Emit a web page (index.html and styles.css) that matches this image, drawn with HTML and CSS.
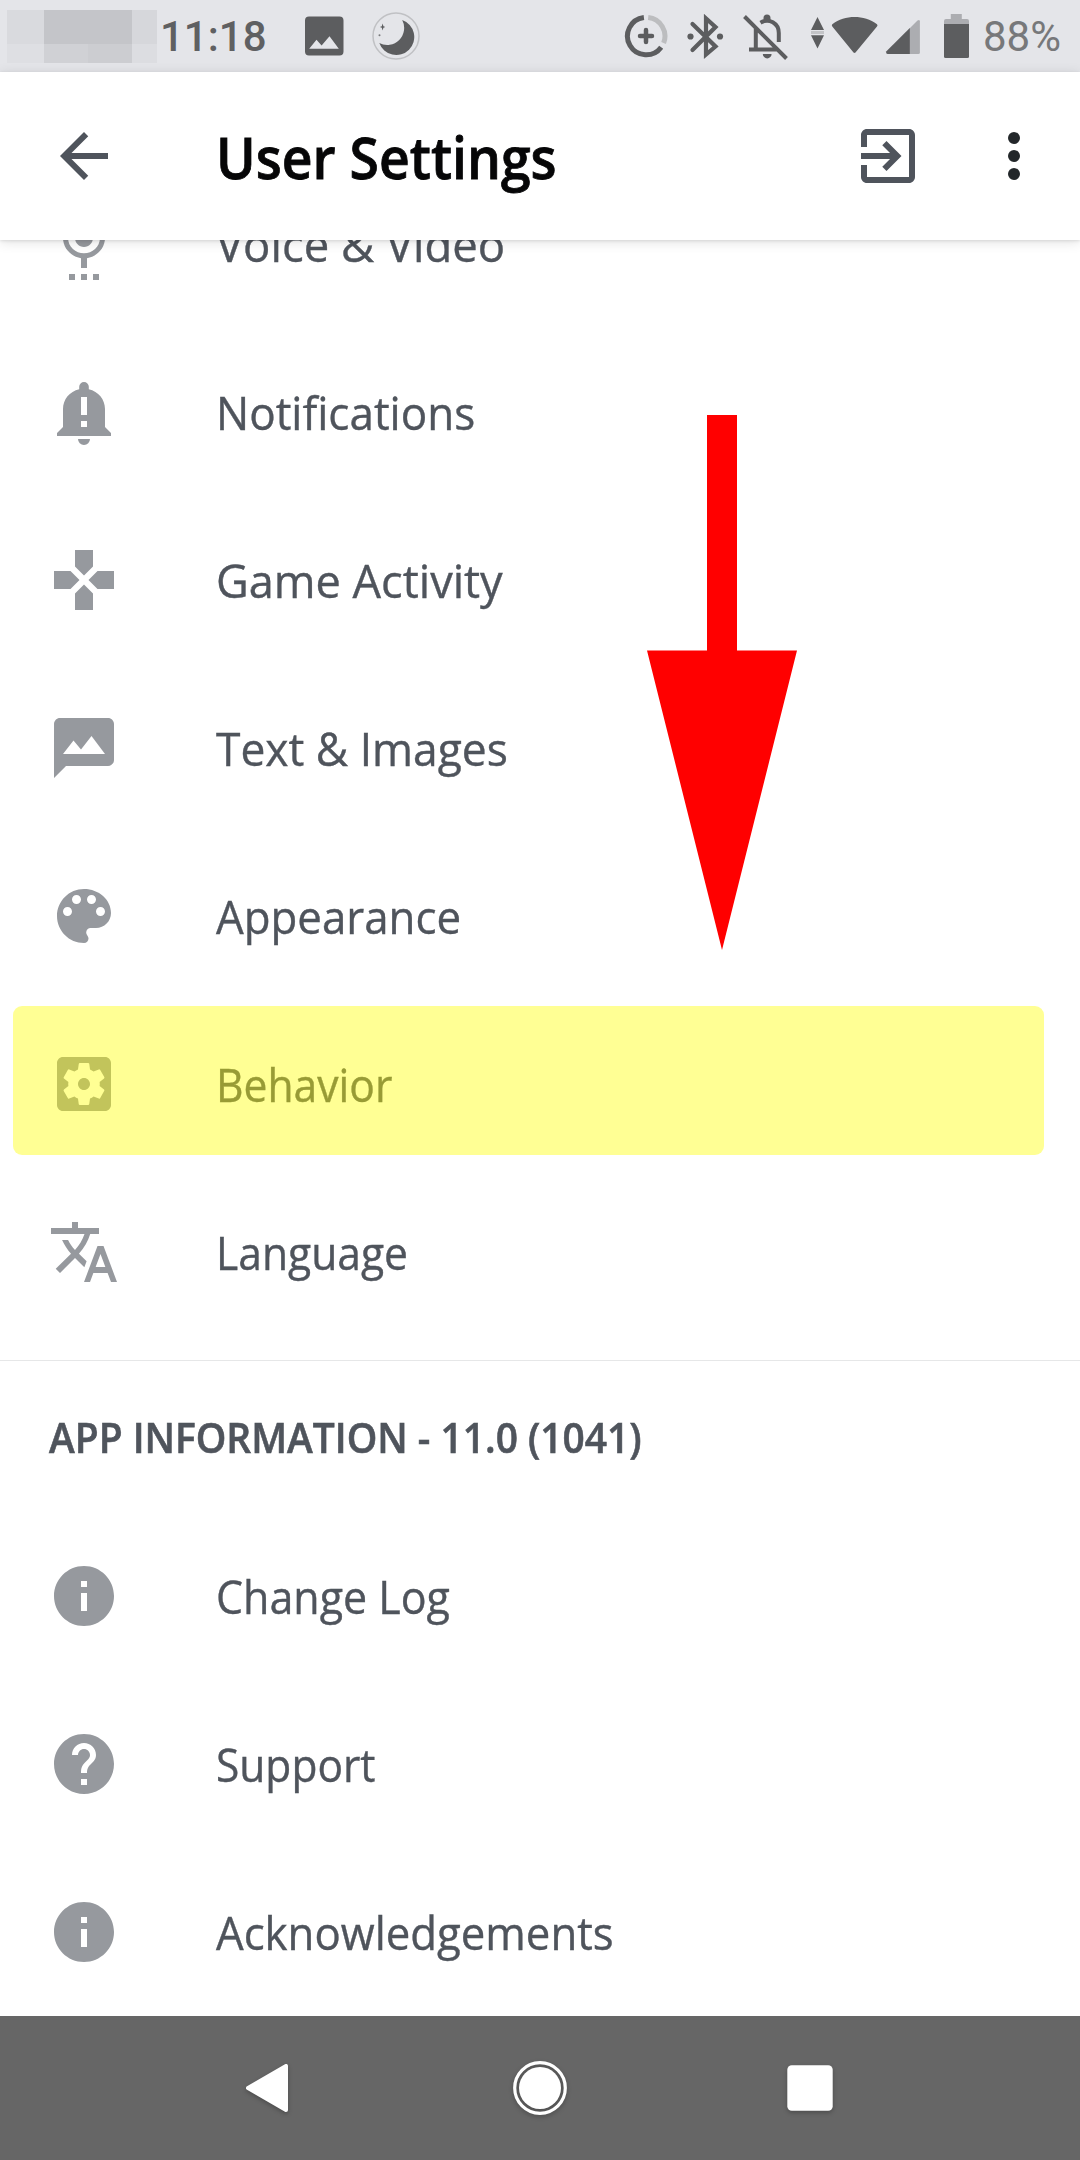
FILE: index.html
```html
<!DOCTYPE html>
<html lang="en">
<head>
<meta charset="utf-8">
<title>User Settings</title>
<link rel="stylesheet" href="styles.css">
</head>
<body>
<div class="screen">
  <div class="status-bar">
    <div class="mosaic"><i class="m1"></i><i class="m2"></i><i class="m3"></i><i class="m4"></i><i class="m5"></i><i class="m6"></i><i class="m7"></i></div>
    <span class="clock">11:18</span>
    <svg class="st-photo" width="40" height="72" viewBox="304 0 40 72"><path fill="#5c5d5f" fill-rule="evenodd" d="M309 16.5h30.500a4 4 0 0 1 4 4v31a4 4 0 0 1-4 4h-30.500a4 4 0 0 1-4-4v-31a4 4 0 0 1 4-4zM309.200 48.700h29.600l-9.300-12.400-7.900 9.200-5.100-5.800z"/></svg>
    <svg class="st-moon" width="50" height="72" viewBox="371 0 50 72"><circle cx="396" cy="36" r="23" fill="none" stroke="#c0c1c4" stroke-width="1.500"/><path fill="#5c5d5f" d="M402.200 20A18 18 0 1 1 379.300 43A17 17 0 0 0 402.200 20zM382.600 23.500l.8 2.700 1.900.8-1.900.8-.8 2.700-.8-2.700-1.900-.8 1.900-.8z"/><circle cx="379.500" cy="35.300" r="1" fill="#77787a"/></svg>
    <div class="status-right">
      <svg class="st-saver" width="44" height="72" viewBox="624 0 44 72" fill="none" stroke="#5c5d5f" stroke-width="5"><path d="M643.900 17.500A18.700 18.700 0 1 0 661.200 47.200"/><path stroke="#bcbdbf" d="M648.200 17.500A18.700 18.700 0 0 1 663.600 43"/><path stroke-width="4.500" stroke-linecap="round" d="M646 30v12M640 36h12"/></svg>
      <svg class="st-bt" width="38" height="72" viewBox="686 0 38 72" fill="none" stroke="#5c5d5f" stroke-width="4.200" stroke-linecap="round"><path d="M692.500 24L715.500 46.500L706 54.500V18.500L715.500 27L692.500 50"/><circle cx="690.500" cy="36.500" r="3.100" fill="#5c5d5f" stroke="none"/><circle cx="720" cy="36.500" r="3.100" fill="#5c5d5f" stroke="none"/></svg>
      <svg class="st-bell" width="46" height="72" viewBox="742 0 46 72" fill="none" stroke="#5c5d5f" stroke-width="4"><path d="M744.500 16.500L786.500 58.500M749 49.500H778M755.800 28V49M760.500 22.800C769 17.500 778.800 23.500 778.800 33V42"/><path fill="#5c5d5f" stroke="none" d="M763.500 22v-4a3.500 3.500 0 0 1 7 0v4zM762.800 54h8.800a4.400 4.400 0 0 1-8.800 0z"/></svg>
      <svg class="st-updown" width="15" height="72" viewBox="810 0 15 72"><path fill="#5c5d5f" d="M817.500 17l6.500 13h-13zM817.500 48.500l6.500-13.300h-13z"/><path fill="#c3c4c7" d="M811 31h13v3h-13z"/></svg>
      <svg class="st-wifi" width="47" height="72" viewBox="831 0 47 72"><path fill="#5c5d5f" d="M832.300 24.200C845 14.600 864 14.600 877 24.200Q878 25.500 877 26.500L855.500 52.600Q854.500 53.400 853.500 52.600L832.300 26.500Q831.300 25.300 832.300 24.200z"/></svg>
      <svg class="st-signal" width="36" height="72" viewBox="885 0 36 72"><path fill="#acadb1" d="M909 29l8.500-8.500q2.400-1.500 2.400 1V52.500q0 1.500-1.500 1.500H909z"/><path fill="#5c5d5f" d="M909.800 28v26H887.500q-2-.5-1.300-2.500z"/></svg>
      <svg class="st-battery" width="27" height="72" viewBox="943 0 27 72"><path fill="#acadb1" d="M944 24.500V21q0-2 2-2h4.800V14H961.800V19H967q2 0 2 2v3.500z"/><path fill="#5c5d5f" d="M944 24H969V56.500q0 1.500-1.500 1.500H945.500q-1.500 0-1.500-1.500z"/></svg>
      <span class="percent">88%</span>
    </div>
  </div>

  <header class="app-bar">
    <svg class="icon back" viewBox="0 0 24 24"><path d="M20 11H7.830l5.590-5.590L12 4l-8 8 8 8 1.410-1.410L7.830 13H20v-2z"/></svg>
    <h1 class="title">User Settings</h1>
    <svg class="icon exit" viewBox="0 0 24 24"><path d="M10.090 15.590L11.500 17l5-5-5-5-1.410 1.410L12.670 11H3v2h9.670l-2.580 2.590zM19 3H5c-1.110 0-2 .9-2 2v4h2V5h14v14H5v-4H3v4c0 1.100.89 2 2 2h14c1.100 0 2-.9 2-2V5c0-1.100-.9-2-2-2z"/></svg>
    <svg class="icon more" viewBox="0 0 24 24"><circle cx="12" cy="6" r="2"/><circle cx="12" cy="12" r="2"/><circle cx="12" cy="18" r="2"/></svg>
  </header>

  <main class="content">
    <ul class="list list-settings">
      <li class="row"><svg class="icon" viewBox="0 0 24 24"><path d="M12 13c1.660 0 2.990-1.340 2.990-3L15 4c0-1.660-1.340-3-3-3S9 2.340 9 4v6c0 1.660 1.340 3 3 3zm-1 11h2v-2h-2v2zm-4 0h2v-2H7v2zm8 0h2v-2h-2v2zm4-14h-1.700c0 3-2.540 5.100-5.300 5.100S6.700 13 6.700 10H5c0 3.410 2.720 6.230 6 6.720V20h2v-3.280c3.280-.49 6-3.310 6-6.720z"/></svg><span class="label voice">Voice &amp; Video</span></li>
      <li class="row"><svg class="icon" viewBox="0 0 24 24"><path fill-rule="evenodd" d="M12 2a1.600 1.600 0 0 0-1.600 1.600v.8C7.200 5.100 5 7.800 5 11v6l-2 2v1h18v-1l-2-2v-6c0-3.200-2.200-5.900-5.400-6.600v-.8A1.600 1.600 0 0 0 12 2zM11 7h2v6h-2zM11 15h2v2h-2zM10 21a2 2 0 0 0 4 0z"/></svg><span class="label notifications">Notifications</span></li>
      <li class="row"><svg class="icon" viewBox="0 0 24 24"><path d="M15 7.500V2H9v5.500l3 3 3-3zM7.500 9H2v6h5.500l3-3-3-3zM9 16.500V22h6v-5.500l-3-3-3 3zM16.500 9l-3 3 3 3H22V9h-5.500z"/></svg><span class="label game">Game Activity</span></li>
      <li class="row"><svg class="icon" viewBox="0 0 24 24"><path d="M20 2H4c-1.100 0-1.990.9-1.990 2L2 22l4-4h14c1.100 0 2-.9 2-2V4c0-1.100-.9-2-2-2zM5 14l3.500-4.500 2.500 3.010L14.500 8l4.500 6H5z"/></svg><span class="label images">Text &amp; Images</span></li>
      <li class="row"><svg class="icon" viewBox="0 0 24 24"><path d="M12 3c-4.970 0-9 4.030-9 9s4.030 9 9 9c.83 0 1.500-.67 1.500-1.500 0-.39-.15-.74-.39-1.010-.23-.26-.38-.61-.38-.99 0-.83.67-1.500 1.500-1.500H16c2.760 0 5-2.240 5-5 0-4.420-4.030-8-9-8zm-5.500 9c-.83 0-1.500-.67-1.500-1.500S5.670 9 6.500 9 8 9.670 8 10.500 7.330 12 6.500 12zm3-4C8.670 8 8 7.330 8 6.500S8.670 5 9.500 5s1.500.67 1.500 1.500S10.330 8 9.500 8zm5 0c-.83 0-1.500-.67-1.500-1.500S13.670 5 14.500 5s1.500.67 1.500 1.500S15.330 8 14.500 8zm3 4c-.83 0-1.500-.67-1.500-1.500S16.670 9 17.500 9s1.500.67 1.500 1.500-.67 1.500-1.500 1.500z"/></svg><span class="label appearance">Appearance</span></li>
      <li class="row highlighted"><svg class="icon" viewBox="0 0 24 24"><path d="M12 10c-1.100 0-2 .9-2 2s.9 2 2 2 2-.9 2-2-.9-2-2-2zm7-7H5c-1.110 0-2 .9-2 2v14c0 1.100.89 2 2 2h14c1.110 0 2-.9 2-2V5c0-1.100-.89-2-2-2zm-1.750 9c0 .23-.02.46-.05.68l1.480 1.160c.13.11.17.3.08.45l-1.400 2.420c-.09.15-.27.21-.43.15l-1.740-.7c-.36.28-.76.51-1.180.69l-.26 1.850c-.03.17-.18.3-.35.3h-2.800c-.17 0-.32-.13-.35-.29l-.26-1.850c-.43-.18-.82-.41-1.180-.69l-1.740.7c-.16.06-.34 0-.43-.15l-1.400-2.420c-.09-.15-.05-.34.08-.45l1.480-1.160c-.03-.23-.05-.46-.05-.69 0-.23.02-.46.05-.68l-1.480-1.160c-.13-.11-.17-.3-.08-.45l1.400-2.420c.09-.15.27-.21.43-.15l1.740.7c.36-.28.76-.51 1.180-.69l.26-1.850c.03-.17.18-.3.35-.3h2.800c.17 0 .32.13.35.29l.26 1.850c.43.18.82.41 1.180.69l1.740-.7c.16-.06.34 0 .43.15l1.400 2.420c.09.15.05.34-.08.45l-1.480 1.160c.03.23.05.46.05.69z"/></svg><span class="label behavior">Behavior</span></li>
      <li class="row"><svg class="icon" viewBox="0 0 24 24"><path d="M12.870 15.070l-2.540-2.510.03-.03c1.740-1.940 2.980-4.170 3.710-6.530H17V4h-7V2H8v2H1v1.990h11.170C11.500 7.920 10.440 9.750 9 11.350 8.070 10.320 7.300 9.190 6.690 8h-2c.73 1.630 1.730 3.170 2.980 4.560l-5.090 5.020L4 19l5-5 3.110 3.110.76-2.040zM18.500 10h-2L12 22h2l1.120-3h4.750L21 22h2l-4.500-12zm-2.620 7l1.620-4.330L19.120 17h-3.240z"/></svg><span class="label language">Language</span></li>
    </ul>
    <section class="app-info">
      <h2 class="section-title"><span class="section-text">APP INFORMATION - 11.0 (1041)</span></h2>
      <ul class="list">
        <li class="row"><svg class="icon" viewBox="0 0 24 24"><path d="M12 2C6.480 2 2 6.480 2 12s4.480 10 10 10 10-4.480 10-10S17.520 2 12 2zm1 15h-2v-6h2v6zm0-8h-2V7h2v2z"/></svg><span class="label changelog">Change Log</span></li>
        <li class="row"><svg class="icon" viewBox="0 0 24 24"><path d="M12 2C6.480 2 2 6.480 2 12s4.480 10 10 10 10-4.480 10-10S17.520 2 12 2zm1 17h-2v-2h2v2zm2.070-7.750l-.9.920C13.450 12.900 13 13.500 13 15h-2v-.5c0-1.100.45-2.100 1.170-2.830l1.240-1.260c.37-.36.59-.86.59-1.410 0-1.100-.9-2-2-2s-2 .9-2 2H8c0-2.210 1.790-4 4-4s4 1.790 4 4c0 .88-.36 1.680-.93 2.250z"/></svg><span class="label support">Support</span></li>
        <li class="row"><svg class="icon" viewBox="0 0 24 24"><path d="M12 2C6.480 2 2 6.480 2 12s4.480 10 10 10 10-4.480 10-10S17.520 2 12 2zm1 15h-2v-6h2v6zm0-8h-2V7h2v2z"/></svg><span class="label ack">Acknowledgements</span></li>
      </ul>
    </section>
    <svg class="pointer" width="150" height="535" viewBox="0 0 150 535"><path fill="#f00" d="M60 0h30v235.500h60L75 535 0 235.500h60z"/></svg>
  </main>

  <nav class="nav-bar">
    <svg class="nav-icon" viewBox="0 0 72 72"><path fill="#fff" stroke="#fff" stroke-width="4" stroke-linejoin="round" d="M52 14V58L14 36z"/></svg>
    <svg class="nav-icon" viewBox="0 0 72 72"><circle cx="36" cy="36" r="25.300" fill="none" stroke="#fff" stroke-width="3.200"/><circle cx="36" cy="36" r="21" fill="#fff"/></svg>
    <svg class="nav-icon" viewBox="0 0 72 72"><rect x="13.300" y="13.300" width="45.400" height="45.400" rx="4.500" fill="#fff"/></svg>
  </nav>
</div>
</body>
</html>
```
FILE: styles.css
```css
* { box-sizing: border-box; }
body {
  margin: 0;
  background: #fff;
  color: #4f545c;
  font-family: "Open Sans", "Noto Sans", sans-serif;
}
.screen {
  display: flex;
  flex-direction: column;
  width: 1080px;
  height: 2160px;
  overflow: hidden;
}
svg { display: block; flex: none; }

/* Status bar */
.status-bar {
  display: flex;
  align-items: center;
  height: 72px;
  flex: none;
  padding-right: 19px;
  background: #e4e5e9;
  font-family: Roboto, sans-serif;
  font-size: 42px;
  line-height: 76px;
}
.mosaic {
  display: grid;
  grid-template-columns: 37px 44px 44px 25px;
  grid-template-rows: 34px 19px;
  margin-left: 7px;
}
.m1 { background: #d9dade; }
.m2 { grid-column: span 2; background: #c4c5c9; }
.m3 { background: #d6d7db; }
.m4 { background: #dedfe3; }
.m5 { background: #d0d1d5; }
.m6 { background: #cccdd1; }
.m7 { background: #dcdde1; }
.clock {
  width: 110px;
  margin-left: 3px;
  padding-top: 2px;
  color: #5f6062;
  font-weight: 500;
}
.st-photo { margin-left: 34px; }
.st-moon { margin-left: 27px; }
.status-right { display: flex; margin-left: auto; align-items: center; }
.st-bt, .st-bell { margin-left: 18px; }
.st-updown { margin-left: 22px; }
.st-wifi { margin-left: 6px; }
.st-signal { margin-left: 7px; }
.st-battery { margin-left: 22px; }
.percent { width: 78px; margin-left: 13px; padding-top: 2px; color: #77787a; white-space: nowrap; }

/* App bar */
.app-bar {
  position: relative;
  z-index: 1;
  display: flex;
  align-items: center;
  height: 168px;
  flex: none;
  padding: 0 30px 0 48px;
  background: #fff;
  box-shadow: 0 2px 12px rgba(0, 0, 0, 0.12), 0 1px 3px rgba(0, 0, 0, 0.1);
}
.icon { width: 72px; height: 72px; fill: #96999e; }
.back, .exit { fill: #4f545c; }
.more { margin-left: 54px; fill: #23272a; }
.title {
  margin: 0 auto 0 96px;
  color: #060607;
  font-size: 58px;
  font-weight: 600;
  white-space: nowrap;
  transform: scaleX(0.922);
  transform-origin: left;
  -webkit-text-stroke: 0.8px #060607;
}

/* Settings list */
.content { position: relative; flex: 1; min-height: 0; margin-top: -80px; }
.list { list-style: none; margin: 0; padding: 0; }
.list-settings { padding-bottom: 24px; }
.row {
  position: relative;
  display: flex;
  align-items: center;
  height: 168px;
  padding-left: 48px;
}
.label {
  margin-left: 96px;
  font-size: 46px;
  line-height: 62px;
  white-space: nowrap;
  transform-origin: left;
  -webkit-text-stroke: 0.4px #4f545c;
}
.voice { transform: scaleX(0.988); }
.notifications { transform: scaleX(0.957); }
.game { transform: scaleX(0.98); }
.images { transform: scaleX(0.964); }
.appearance { transform: scaleX(0.953); }
.behavior { transform: scaleX(0.926); }
.language { transform: scaleX(0.926); }
.changelog { transform: scaleX(0.934); }
.support { transform: scaleX(0.924); }
.ack { transform: scaleX(0.951); }
.highlighted::after {
  content: "";
  position: absolute;
  inset: 6px 36px 13px 13px;
  border-radius: 9px;
  background: rgba(255, 255, 0, 0.42);
}
.app-info { border-top: 1px solid #e6e7e8; }
.section-title {
  height: 151px;
  margin: 0;
  padding-left: 49px;
  font-size: 41px;
  font-weight: 600;
  line-height: 152px;
  white-space: nowrap;
}
.section-text {
  display: inline-block;
  transform: scaleX(0.949);
  transform-origin: left;
  -webkit-text-stroke: 0.6px #4f545c;
}
.pointer { position: absolute; left: 647px; top: 255px; }

/* Navigation bar */
.nav-bar {
  position: relative;
  display: flex;
  align-items: center;
  justify-content: center;
  gap: 198px;
  height: 144px;
  flex: none;
  background: #666;
}
.nav-icon { width: 72px; height: 72px; filter: drop-shadow(0 2px 2px rgba(0, 0, 0, 0.25)); }
```
